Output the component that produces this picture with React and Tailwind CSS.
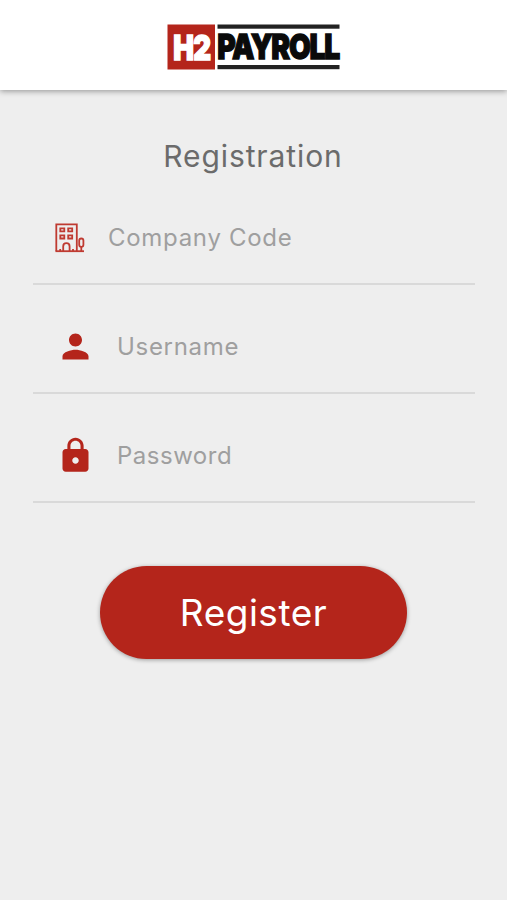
import React from "react";
import { MdPerson, MdLock } from "react-icons/md";

const Logo = () => {
  return (
    <svg className="overflow-visible" width="174" height="46" viewBox="0 0 174 46" role="img" aria-label="H2 Payroll">
      <rect x="0.5" y="0.5" width="47.5" height="45" fill="#b4251b" />
      <text x="6.3" y="35.6" fill="#fff" stroke="#fff" strokeWidth="1.5" fontFamily="Inter, sans-serif" fontWeight="900" fontSize="34.5" letterSpacing="-1" textLength="37" lengthAdjust="spacingAndGlyphs">H2</text>
      <rect x="50.5" y="0.5" width="122" height="4.2" fill="#222" />
      <text x="50.3" y="35.2" fill="#0a0a0a" stroke="#0a0a0a" strokeWidth="1.3" fontFamily="Inter, sans-serif" fontWeight="900" fontSize="34.5" letterSpacing="-1.6" textLength="121.5" lengthAdjust="spacingAndGlyphs">PAYROLL</text>
      <rect x="50.5" y="41" width="122" height="4.2" fill="#222" />
    </svg>
  );
};

const BuildingIcon = () => {
  return (
    <svg width="30" height="30" viewBox="0 0 30 30" fill="none" stroke="#bf3a31" strokeWidth="1.8">
      <path d="M1.3 28.2V1.3H21.8V28.2" />
      <path d="M0.5 28.2H29" />
      <path d="M5.3 5.3h4v3h-4zM13.2 5.3h4v3h-4zM5.3 12.3h4v3.2h-4zM13.2 12.3h4v3.2h-4z" />
      <path d="M8.2 28V23.4a3.2 3.2 0 0 1 6.4 0V28M5.2 28v-2M18 28v-2" />
      <rect x="24.2" y="15.5" width="4.2" height="8.3" rx="2.1" />
      <path d="M26.3 23.8V28" />
    </svg>
  );
};

const Field = ({ icon, label, type = "text", className }) => {
  return (
    <label className="flex items-center h-[109px] pt-4 border-b-2 border-[#d9d9d9]">
      <span className="flex justify-center w-[84px] shrink-0">{icon}</span>
      <input
        type={type}
        placeholder={label}
        className={`w-[300px] bg-transparent outline-none text-2xl placeholder:text-[#9f9f9f] ${className}`}
      />
    </label>
  );
};

const App = () => {
  return (
    <div className="flex flex-col min-h-screen bg-[#eeeeee] font-[Inter,sans-serif]">
      <header className="flex justify-center h-[90px] pt-[23.5px] bg-white shadow-[0_1px_6px_rgba(0,0,0,0.4)]">
        <Logo />
      </header>

      <main className="flex flex-col pl-[33px] pr-8">
        <h1 className="pt-[46px] pr-0.5 h-[86px] text-center text-[30px] leading-[40px] tracking-[0.9px] text-[#6b6b6b]">
          Registration
        </h1>
        <Field icon={<span className="mr-[10px]"><BuildingIcon /></span>} label="Company Code" className="-ml-[9px] tracking-[0.7px]" />
        <Field icon={<MdPerson size={39} color="#b4251b" />} label="Username" className="tracking-[0.7px]" />
        <Field icon={<MdLock size={39} color="#b4251b" />} label="Password" type="password" className="tracking-[0.5px]" />

        <button className="self-center mt-[63px] mr-px w-[307px] h-[93px] rounded-full bg-[#b4251b] text-white text-[37px] tracking-[0.5px] shadow-[0_1px_4px_rgba(0,0,0,0.35)]">
          Register
        </button>
      </main>
    </div>
  );
};

export default App;
